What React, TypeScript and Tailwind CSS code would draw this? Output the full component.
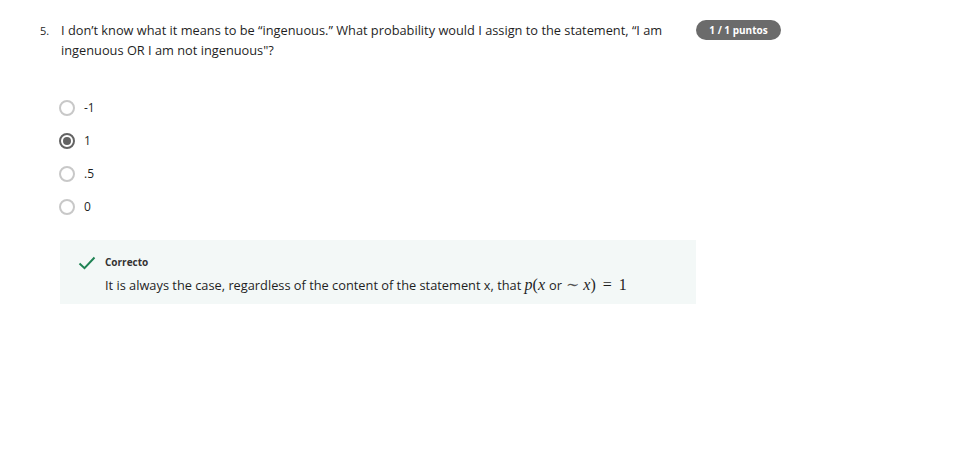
import React from "react";

const options = [
  { label: "-1", checked: false },
  { label: "1", checked: true },
  { label: ".5", checked: false },
  { label: "0", checked: false },
];

const Radio = ({ checked }: { checked: boolean }) => (
  <span
    className={
      "flex h-4 w-4 shrink-0 items-center justify-center rounded-full border-2 " +
      (checked ? "border-[#636363]" : "border-[#c8c8c8]")
    }
  >
    {checked && <span className="h-2 w-2 rounded-full bg-[#636363]" />}
  </span>
);

export default function App() {
  return (
    <div
      className="h-[460px] w-[960px] bg-white text-[#1f1f1f]"
      style={{ fontFamily: '"Open Sans", "Noto Sans", sans-serif' }}
    >
      <div className="flex items-start pl-[40px] pt-[20px]">
        {/* Question */}
        <div className="w-[656px]">
          <div className="flex">
            <span className="w-[21px] shrink-0 pt-[1px] text-[11px] leading-[20px]">5.</span>
            <p className="w-[620px] text-[12.8px] leading-[20px]">
              I don’t know what it means to be “ingenuous.” What probability would I assign to the
              statement, “I am ingenuous OR I am not ingenuous"?
            </p>
          </div>

          <div className="mt-[39px] flex flex-col gap-[16px] pl-[19px]">
            {options.map((o) => (
              <label key={o.label} className="flex h-[17px] items-center gap-[9px] text-[12px]">
                <Radio checked={o.checked} />
                <span>{o.label}</span>
              </label>
            ))}
          </div>

          <div className="ml-[20px] mt-[25px] flex h-[64px] w-[636px] items-start gap-[9px] bg-[#f3f8f7] pl-[18px] pt-[15px]">
            <svg width="18" height="14" viewBox="0 0 18 14" className="mt-[1px]">
              <path
                d="M1.5 7.5 L6.5 12.2 L16.5 1.5"
                fill="none"
                stroke="#1f8354"
                strokeWidth="2"
              />
            </svg>
            <div>
              <div className="text-[10px] font-bold leading-[14px] text-[#333]">Correcto</div>
              <div className="mt-[7px] text-[12.8px] leading-[18px]">
                It is always the case, regardless of the content of the statement x, that{" "}
                <span
                  className="text-[16px]"
                  style={{ fontFamily: '"Liberation Serif", "DejaVu Serif", serif' }}
                >
                  <i>p</i>(<i>x</i>{" "}
                  <span
                    className="text-[12.8px]"
                    style={{ fontFamily: '"Open Sans", sans-serif' }}
                  >
                    or
                  </span>{" "}
                  <span className="text-[#555]">∼</span> <i>x</i>) <span className="mx-[3px]">=</span> 1
                </span>
              </div>
            </div>
          </div>
        </div>

        {/* Points badge */}
        <div className="flex h-[20px] w-[85px] items-center justify-center rounded-full bg-[#6b6b6b] text-[10px] font-bold text-white">
          1 / 1 puntos
        </div>
      </div>
    </div>
  );
}
